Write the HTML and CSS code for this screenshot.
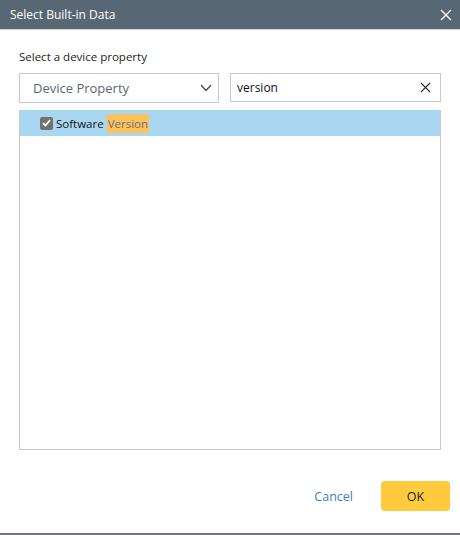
FILE: index.html
```html
<!DOCTYPE html>
<html lang="en">
<head>
    <meta charset="UTF-8">
    <title>Select Built-in Data</title>
    <link rel="stylesheet" href="styles.css">
</head>
<body>
    <div class="dialog">
        <div class="header">
            <span class="title">Select Built-in Data</span>
            <svg class="close" width="12" height="12" viewBox="0 0 12 12">
                <path d="M1 1L11 11M11 1L1 11" stroke="#fff" stroke-width="1.4" fill="none"/>
            </svg>
        </div>
        <div class="body">
            <div class="label">Select a device property</div>
            <div class="filters">
                <div class="select">
                    <span>Device Property</span>
                    <svg width="12" height="8" viewBox="0 0 12 8">
                        <path d="M1 1L6 6.5L11 1" stroke="#444" stroke-width="1.2" fill="none"/>
                    </svg>
                </div>
                <div class="search">
                    <span>version</span>
                    <svg width="11" height="11" viewBox="0 0 11 11">
                        <path d="M1 1L10 10M10 1L1 10" stroke="#333" stroke-width="1.2" fill="none"/>
                    </svg>
                </div>
            </div>
            <div class="list">
                <div class="row selected">
                    <span class="check">
                        <svg width="9" height="8" viewBox="0 0 9 8">
                            <path d="M1 4.2L3.4 6.5L8 1.2" stroke="#fff" stroke-width="1.8" fill="none"/>
                        </svg>
                    </span>
                    <span class="name">Software <mark>Version</mark></span>
                </div>
            </div>
        </div>
        <div class="footer">
            <button class="cancel">Cancel</button>
            <button class="ok">OK</button>
        </div>
    </div>
</body>
</html>
```

FILE: styles.css
```css
body {
    margin: 0;
    font-family: 'Open Sans', 'Segoe UI', sans-serif;
    background: #fff;
}
.dialog {
    width: 460px;
    height: 535px;
    display: flex;
    flex-direction: column;
    border-bottom: 2px solid #6e7780;
    box-sizing: border-box;
}
.header {
    height: 30px;
    flex-shrink: 0;
    background: #586774;
    border-bottom: 1px solid #d0d5d9;
    display: flex;
    align-items: center;
    justify-content: space-between;
    padding: 0 8px 0 10px;
    box-sizing: border-box;
}
.title {
    color: #fff;
    font-size: 12px;
}
.close {
    margin-top: 1px;
}
.body {
    padding: 19px 19px 0 19px;
    display: flex;
    flex-direction: column;
    flex-shrink: 0;
}
.label {
    font-size: 11.5px;
    color: #222;
    line-height: 16px;
}
.filters {
    display: flex;
    gap: 11px;
    margin-top: 8px;
}
.select {
    width: 200px;
    height: 30px;
    border: 1px solid #c8c8c8;
    box-sizing: border-box;
    display: flex;
    align-items: center;
    justify-content: space-between;
    padding: 0 6px 0 13px;
    font-size: 13px;
    color: #5d6872;
}
.search {
    flex: 1;
    height: 29px;
    border: 1px solid #c8c8c8;
    box-sizing: border-box;
    display: flex;
    align-items: center;
    justify-content: space-between;
    padding: 0 9px 0 6px;
    font-size: 12px;
    color: #111;
}
.list {
    margin-top: 7px;
    height: 339px;
    border: 1px solid #c8c8c8;
    border-top: none;
}
.row {
    height: 26px;
    display: flex;
    align-items: center;
    padding-left: 20px;
    font-size: 11.5px;
    color: #111;
}
.row.selected {
    background: #a9d7f1;
}
.check {
    width: 13px;
    height: 13px;
    background: #717171;
    border-radius: 2px;
    display: flex;
    align-items: center;
    justify-content: center;
    margin-right: 3px;
}
mark {
    background: #fbc25e;
    color: #6f6f6f;
    padding: 2px 1px;
}
.footer {
    flex: 1;
    display: flex;
    align-items: flex-start;
    justify-content: flex-end;
    gap: 28px;
    padding: 31px 10px 0 0;
}
button {
    font-family: inherit;
    font-size: 12.5px;
    border: none;
    cursor: pointer;
}
.cancel {
    background: none;
    color: #3a7fc1;
    padding: 0;
    height: 30px;
}
.ok {
    background: #ffcb3d;
    color: #222;
    width: 69px;
    height: 30px;
    border-radius: 4px;
}
```
